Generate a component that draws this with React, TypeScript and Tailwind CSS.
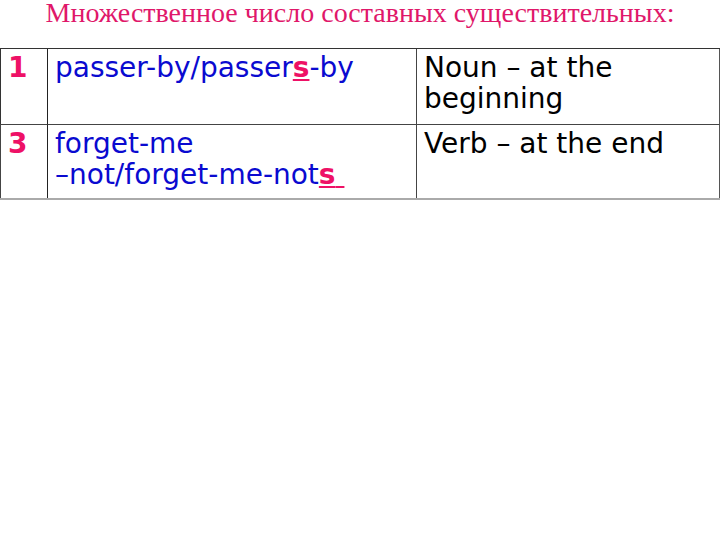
import React from "react";

export default function App() {
  const sans = { fontFamily: '"DejaVu Sans", sans-serif' };
  return (
    <div className="w-[720px] h-[540px] bg-white overflow-hidden relative">
      <h1
        className="text-center text-[28px] leading-[26px] h-[48px] text-[#e0176a]"
        style={{ fontFamily: '"Liberation Serif", serif' }}
      >
        Множественное число составных существительных:
      </h1>
      <div
        className="w-[720px] grid grid-cols-[48px_368px_304px] border-t border-[#333] border-b-2 border-b-[#aaa] text-[28px] leading-[31px]"
        style={sans}
      >
        <div className="h-[75px] border-l border-[#333] border-r border-r-[#222] pl-[7px] pt-[3px] font-bold text-[#ee1166]">1</div>
        <div className="h-[75px] pl-[7px] pt-[3px] text-[#0a0ad0]">
          passer-by/passer
          <span className="font-bold text-[#ee1166] underline decoration-[#ee1166] decoration-2 underline-offset-2">s</span>
          -by
        </div>
        <div className="h-[75px] border-l border-[#444] border-r border-r-[#555] pl-[7px] pt-[3px] text-black">
          Noun – at the beginning
        </div>
        <div className="h-[74px] border-t border-[#444] border-l border-[#333] border-r border-r-[#222] pl-[7px] pt-[3px] font-bold text-[#ee1166]">3</div>
        <div className="h-[74px] border-t border-[#444] pl-[7px] pt-[3px] text-[#0a0ad0]">
          forget-me
          <br />
          –not/forget-me-not
          <span className="text-[#ee1166] underline decoration-[#ee1166] decoration-2 underline-offset-2">
            <span className="font-bold">s</span>
            {"\u00a0"}
          </span>
        </div>
        <div className="h-[74px] border-t border-[#444] border-l border-[#444] border-r border-r-[#555] pl-[7px] pt-[3px] text-black">
          Verb – at the end
        </div>
      </div>
    </div>
  );
}
